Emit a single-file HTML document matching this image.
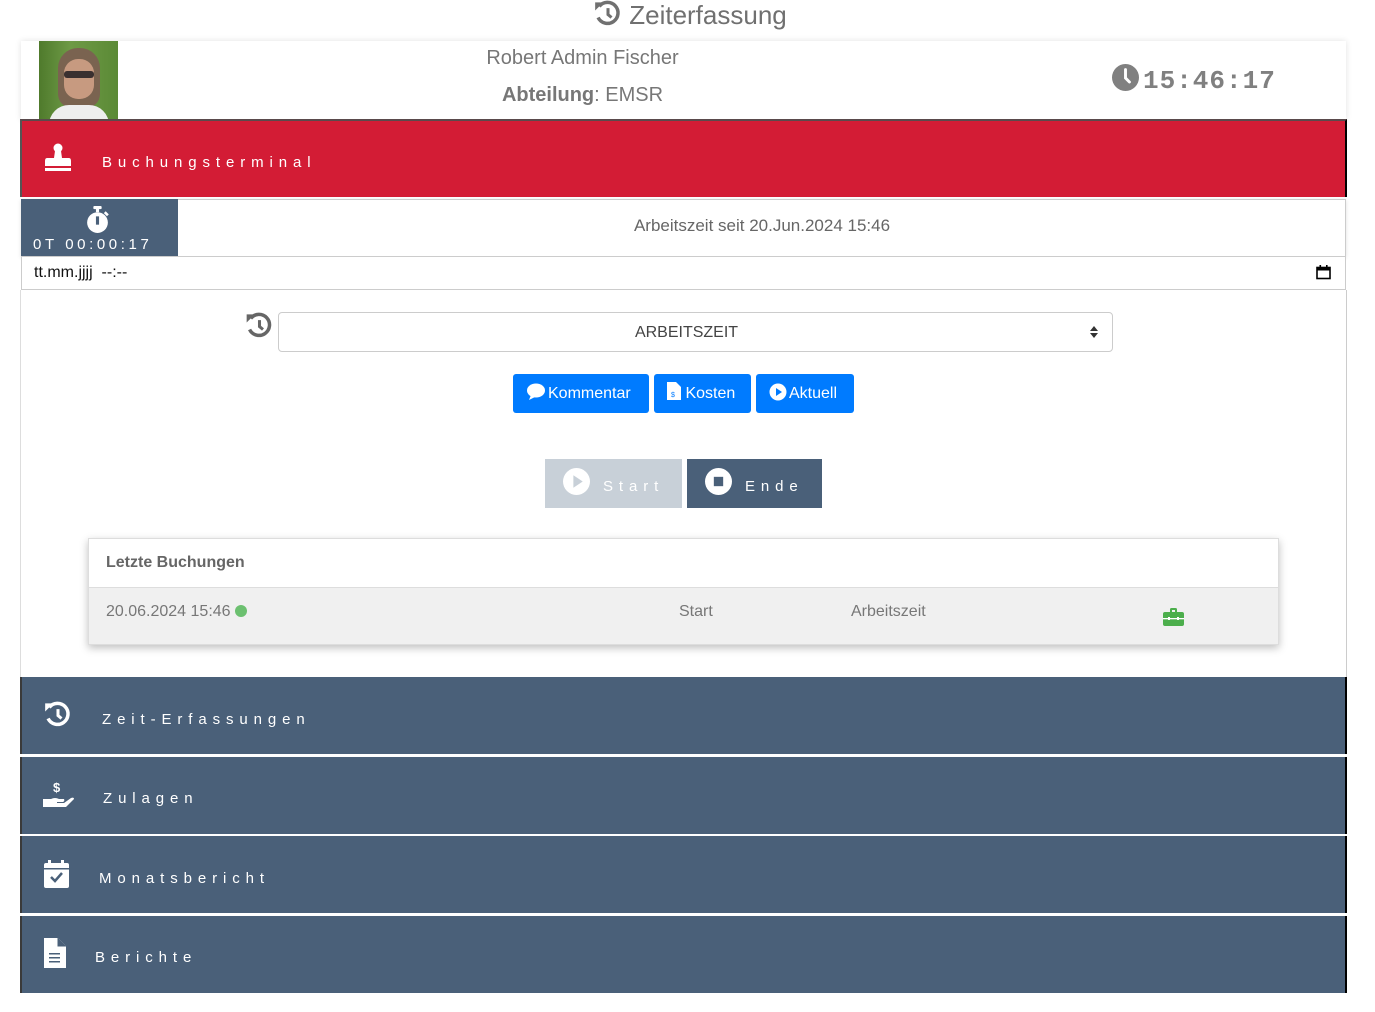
<!DOCTYPE html>
<html><head><meta charset="utf-8"><style>
*{box-sizing:border-box;margin:0;padding:0}
body{width:1375px;height:1012px;background:#fff;font-family:"Liberation Sans",Arial,sans-serif;position:relative;overflow:hidden;color:#666}
.a{position:absolute}
.sp{font-size:15px;letter-spacing:5.9px;color:#fff}
.nav{position:absolute;left:20px;width:1327px;height:77px;background:#4a6079;border-left:2px solid #3a3a3a;border-right:2px solid #000}
.btn{position:absolute;top:374px;height:39px;background:#007bff;border-radius:3px;color:#fff;font-size:16px;line-height:39px;padding-left:13px}
</style></head><body>

<div class="a" style="left:594px;top:0;font-size:26px;color:#707070;line-height:30px">
<svg width="28" height="28" viewBox="0 0 24 24" style="vertical-align:-4px"><path d="M4.5 5.5 A9 9 0 1 1 3.5 15" fill="none" stroke="#707070" stroke-width="3"/><path d="M1 2 L8 2 L1 9 Z" fill="#707070"/><path d="M12 7 V12.5 L15 15" fill="none" stroke="#707070" stroke-width="2.6"/></svg> Zeiterfassung</div>

<div class="a" style="left:20px;top:290px;width:1327px;height:387px;border-left:1px solid #ddd;border-right:1px solid #ccc"></div>

<div class="a" style="left:21px;top:41px;width:1325px;height:79px;background:#fff;box-shadow:0 0 6px rgba(0,0,0,.12)"></div>
<div class="a" style="left:39px;top:41px;width:79px;height:78px;background:linear-gradient(90deg,#4f7a2c,#6e9a46 40%,#5b8a36);overflow:hidden">
 <div class="a" style="left:19px;top:7px;width:42px;height:60px;border-radius:20px 20px 14px 14px;background:#7a6350"></div>
 <div class="a" style="left:25px;top:18px;width:30px;height:40px;border-radius:14px;background:#c79a80"></div>
 <div class="a" style="left:25px;top:30px;width:30px;height:7px;background:#3a3030;border-radius:3px"></div>
 <div class="a" style="left:10px;top:64px;width:60px;height:20px;border-radius:20px 20px 0 0;background:#eee"></div>
</div>
<div class="a" style="left:0;width:1165px;top:47px;text-align:center;font-size:20px;color:#777">Robert Admin Fischer</div>
<div class="a" style="left:0;width:1165px;top:84px;text-align:center;font-size:20px;color:#777"><b>Abteilung</b>: EMSR</div>
<div class="a" style="left:1112px;top:64px;font-family:'Liberation Mono',monospace;font-size:26px;font-weight:bold;color:#808080;letter-spacing:1px;line-height:30px">
<svg width="27" height="27" viewBox="0 0 24 24" style="vertical-align:-3px;margin-right:4px"><circle cx="12" cy="12" r="12" fill="#808080"/><path d="M12 5 V12.5 L15.5 16" fill="none" stroke="#fff" stroke-width="2.6" stroke-linecap="round"/></svg>15:46:17</div>

<div class="a" style="left:20px;top:119px;width:1327px;height:78px;background:#d31c35;border-top:2px solid #5a4a4c;border-right:2px solid #000;border-left:2px solid #555"></div>
<svg class="a" style="left:43px;top:143px" width="30" height="30" viewBox="0 0 30 30"><circle cx="15" cy="5" r="4.5" fill="#fff"/><path d="M12 8 H18 L19 15 H26 Q28 15 28 18 V23 H2 V18 Q2 15 4 15 H11 Z" fill="#fff"/><rect x="2" y="25" width="26" height="3" fill="#fff"/></svg>
<div class="a sp" style="left:102px;top:154px">Buchungsterminal</div>

<div class="a" style="left:21px;top:199px;width:1325px;height:58px;border:1px solid #ccc;background:#fff;box-shadow:0 1px 4px rgba(0,0,0,.12)"></div>
<div class="a" style="left:21px;top:199px;width:157px;height:57px;background:#4a6079"></div>
<svg class="a" style="left:85px;top:206px" width="25" height="28" viewBox="0 0 24 27"><rect x="8" y="0" width="8" height="3" rx="1" fill="#fff"/><rect x="10.5" y="2" width="3" height="4" fill="#fff"/><circle cx="12" cy="16" r="10" fill="#fff"/><rect x="10.5" y="10" width="3" height="8" fill="#4a6079"/><path d="M19 6 L22 9" stroke="#fff" stroke-width="2.5"/></svg>
<div class="a" style="left:33px;top:236px;font-size:15px;letter-spacing:3.6px;color:#fff">0T 00:00:17</div>
<div class="a" style="left:178px;width:1168px;top:216px;text-align:center;font-size:17px;color:#666">Arbeitszeit seit 20.Jun.2024 15:46</div>

<div class="a" style="left:21px;top:256px;width:1325px;height:34px;border:1px solid #ccc;background:#fff"></div>
<div class="a" style="left:34px;top:264px;font-size:16px;color:#111">tt.mm.jjjj&nbsp; --:--</div>
<svg class="a" style="left:1316px;top:265px" width="15" height="15" viewBox="0 0 15 15"><rect x="1" y="2.5" width="13" height="11" fill="none" stroke="#000" stroke-width="1.6"/><rect x="1" y="2.5" width="13" height="3" fill="#000"/><rect x="3.5" y="0" width="1.6" height="3" fill="#000"/><rect x="10" y="0" width="1.6" height="3" fill="#000"/></svg>

<svg class="a" style="left:245px;top:312px" width="29" height="28" viewBox="0 0 24 24"><path d="M4.5 5.5 A9 9 0 1 1 3.5 15" fill="none" stroke="#666" stroke-width="3"/><path d="M1 2 L8 2 L1 9 Z" fill="#666"/><path d="M12 7 V12.5 L15 15" fill="none" stroke="#666" stroke-width="2.6"/></svg>
<div class="a" style="left:278px;top:312px;width:835px;height:40px;border:1px solid #ccc;border-radius:4px;background:#fff;text-align:center;line-height:39px;font-size:16px;color:#444;padding-right:18px">ARBEITSZEIT</div>
<svg class="a" style="left:1089px;top:325px" width="10" height="14" viewBox="0 0 10 14"><path d="M5 1 L9 6 H1Z M5 13 L9 8 H1Z" fill="#333"/></svg>

<div class="btn" style="left:513px;width:136px"><svg width="20" height="17" viewBox="0 0 20 17" style="vertical-align:-2px;margin-right:2px"><ellipse cx="10" cy="7.5" rx="9" ry="7" fill="#fff"/><path d="M3 17 L5 12 L9 14Z" fill="#fff"/></svg>Kommentar</div>
<div class="btn" style="left:654px;width:97px"><svg width="14" height="18" viewBox="0 0 14 18" style="vertical-align:-2px"><path d="M0 0 H9 L14 5 V18 H0Z" fill="#fff"/><text x="4" y="15" font-size="7" fill="#007bff">$</text></svg> Kosten</div>
<div class="btn" style="left:756px;width:98px"><svg width="18" height="18" viewBox="0 0 18 18" style="vertical-align:-3px;margin-right:2px"><circle cx="9" cy="9" r="8.5" fill="#fff"/><path d="M7 5 L13 9 L7 13Z" fill="#007bff"/></svg>Aktuell</div>

<div class="a" style="left:545px;top:459px;width:137px;height:49px;background:#c8d0d8"></div>
<svg class="a" style="left:563px;top:468px" width="27" height="27" viewBox="0 0 26 26"><circle cx="13" cy="13" r="13" fill="#fff"/><path d="M10 7 L19 13 L10 19Z" fill="#c8d0d8"/></svg>
<div class="a sp" style="left:603px;top:478px">Start</div>
<div class="a" style="left:687px;top:459px;width:135px;height:49px;background:#4a6079"></div>
<svg class="a" style="left:705px;top:468px" width="27" height="27" viewBox="0 0 26 26"><circle cx="13" cy="13" r="13" fill="#fff"/><rect x="8.5" y="8.5" width="9" height="9" fill="#4a6079"/></svg>
<div class="a sp" style="left:745px;top:478px">Ende</div>

<div class="a" style="left:88px;top:538px;width:1191px;height:107px;border:1px solid #ddd;background:#f0f0f0;box-shadow:0 3px 8px rgba(0,0,0,.25)">
 <div style="height:49px;background:#fff;border-bottom:1px solid #ddd;padding:15px 0 0 17px;font-size:16px;font-weight:bold;color:#666">Letzte Buchungen</div>
</div>
<div class="a" style="left:106px;top:603px;font-size:16px;color:#777">20.06.2024 15:46 <span style="display:inline-block;width:12px;height:12px;border-radius:6px;background:#6cc070;vertical-align:-1px"></span></div>
<div class="a" style="left:679px;top:603px;font-size:16px;color:#777">Start</div>
<div class="a" style="left:851px;top:603px;font-size:16px;color:#777">Arbeitszeit</div>
<svg class="a" style="left:1163px;top:608px" width="21" height="18" viewBox="0 0 21 18"><path d="M7 4 V1.5 Q7 0 8.5 0 H12.5 Q14 0 14 1.5 V4 H12 V2 H9 V4Z" fill="#4cae4c"/><rect x="0" y="4" width="21" height="14" rx="2" fill="#4cae4c"/><rect x="0" y="10" width="21" height="1.3" fill="#fff"/><rect x="5" y="9" width="2" height="3" fill="#fff"/><rect x="14" y="9" width="2" height="3" fill="#fff"/></svg>

<div class="nav" style="top:677px"></div>
<div class="nav" style="top:757px"></div>
<div class="nav" style="top:836px"></div>
<div class="nav" style="top:916px"></div>
<svg class="a" style="left:44px;top:701px" width="28" height="28" viewBox="0 0 24 24"><path d="M4.5 5.5 A9 9 0 1 1 3.5 15" fill="none" stroke="#fff" stroke-width="3"/><path d="M1 2 L8 2 L1 9 Z" fill="#fff"/><path d="M12 7 V12.5 L15 15" fill="none" stroke="#fff" stroke-width="2.6"/></svg>
<div class="a sp" style="left:102px;top:711px">Zeit-Erfassungen</div>
<svg class="a" style="left:43px;top:780px" width="32" height="28" viewBox="0 0 32 28"><text x="10" y="12" font-size="13" font-weight="bold" fill="#fff" font-family="Liberation Sans">$</text><path d="M0 19 H8 Q12 17 16 19 H21 Q22 21 20 22 H14 V23 H21 L28 18 Q31 17 31 19 L23 27 H0Z" fill="#fff"/></svg>
<div class="a sp" style="left:103px;top:790px">Zulagen</div>
<svg class="a" style="left:44px;top:860px" width="25" height="28" viewBox="0 0 25 28"><rect x="4" y="0" width="3" height="5" fill="#fff"/><rect x="17" y="0" width="3" height="5" fill="#fff"/><rect x="0" y="3" width="25" height="25" rx="2" fill="#fff"/><rect x="0" y="8" width="25" height="1.5" fill="#4a6079"/><path d="M7 17 L11 21 L18 13" fill="none" stroke="#4a6079" stroke-width="2.5"/></svg>
<div class="a sp" style="left:99px;top:870px">Monatsbericht</div>
<svg class="a" style="left:44px;top:938px" width="22" height="30" viewBox="0 0 22 30"><path d="M0 0 H14 L22 8 V30 H0Z" fill="#fff"/><path d="M14 0 V8 H22" fill="#4a6079" stroke="#4a6079" stroke-width="1"/><rect x="5" y="15" width="11" height="1.5" fill="#4a6079"/><rect x="5" y="19" width="11" height="1.5" fill="#4a6079"/><rect x="5" y="23" width="11" height="1.5" fill="#4a6079"/></svg>
<div class="a sp" style="left:95px;top:949px">Berichte</div>
</body></html>
